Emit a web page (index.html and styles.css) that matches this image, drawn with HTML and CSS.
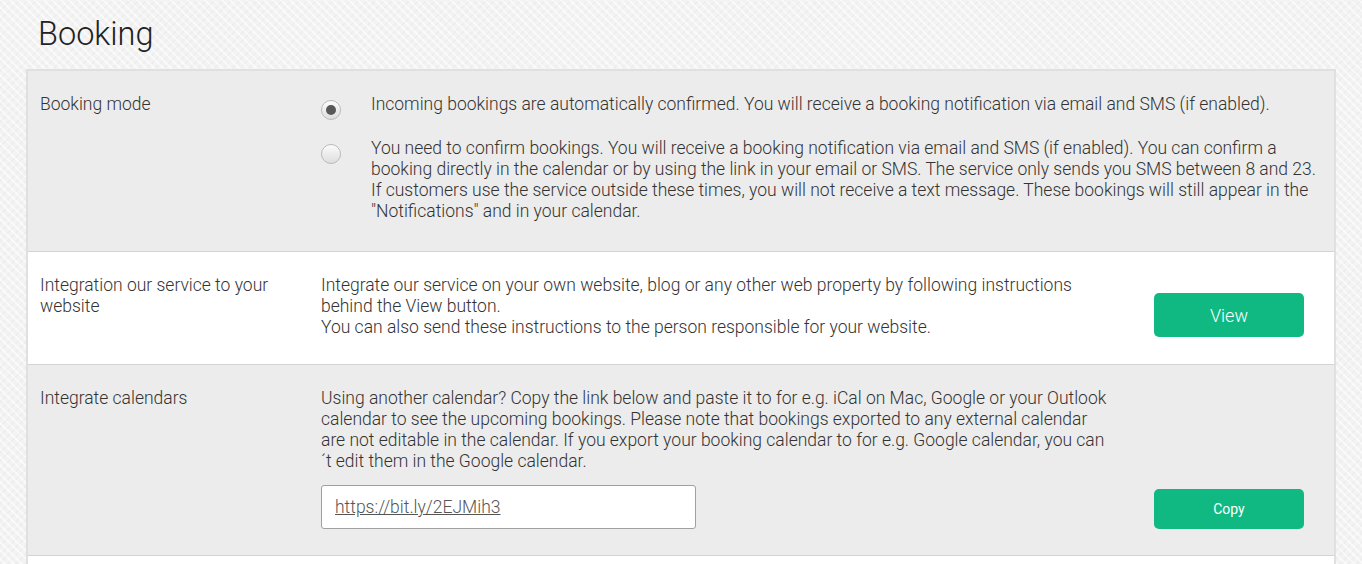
FILE: index.html
```html
<!DOCTYPE html>
<html>
<head>
<meta charset="utf-8">
<link rel="stylesheet" href="styles.css">
</head>
<body>
<div class="page">
  <h1 class="title">Booking</h1>
  <div class="panel">
    <div class="row row-gray row-mode">
      <div class="label">Booking mode</div>
      <div class="options">
        <div class="option">
          <span class="radio checked"></span>
          <p>Incoming bookings are automatically confirmed. You will receive a booking notification via email and SMS (if enabled).</p>
        </div>
        <div class="option">
          <span class="radio"></span>
          <p>You need to confirm bookings. You will receive a booking notification via email and SMS (if enabled). You can confirm a booking directly in the calendar or by using the link in your email or SMS. The service only sends you SMS between 8 and 23. If customers use the service outside these times, you will not receive a text message. These bookings will still appear in the "Notifications" and in your calendar.</p>
        </div>
      </div>
    </div>
    <div class="row row-white">
      <div class="label">Integration our service to your website</div>
      <div class="content">
        <p>Integrate our service on your own website, blog or any other web property by following instructions behind the View button.<br>You can also send these instructions to the person responsible for your website.</p>
      </div>
      <div class="action"><button class="btn btn-view">View</button></div>
    </div>
    <div class="row row-gray">
      <div class="label">Integrate calendars</div>
      <div class="content">
        <p>Using another calendar? Copy the link below and paste it to for e.g. iCal on Mac, Google or your Outlook calendar to see the upcoming bookings. Please note that bookings exported to any external calendar are not editable in the calendar. If you export your booking calendar to for e.g. Google calendar, you can ´t edit them in the Google calendar.</p>
        <div class="link-box"><a href="#">https://bit.ly/2EJMih3</a></div>
      </div>
      <div class="action"><button class="btn btn-copy">Copy</button></div>
    </div>
    <div class="row row-white row-last"></div>
  </div>
</div>
</body>
</html>
```
FILE: styles.css
```css
html, body {
  margin: 0;
  padding: 0;
}
body {
  background-color: #f3f3f3;
  background-image:
    repeating-linear-gradient(45deg, rgba(255,255,255,0.55) 0 2px, transparent 2px 6px),
    repeating-linear-gradient(-45deg, rgba(0,0,0,0.018) 0 2px, transparent 2px 6px);
  font-family: Roboto, "Liberation Sans", sans-serif;
  font-weight: 300;
  color: #333;
  font-size: 17.5px;
  line-height: 21px;
}
.page {
  padding: 0 26px;
}
.title {
  margin: 0;
  padding: 14px 0 0 12px;
  height: 69px;
  box-sizing: border-box;
  font-size: 32.5px;
  line-height: 40px;
  font-weight: 300;
  color: #222;
}
.panel {
  border: 2px solid #e0e0e0;
  border-bottom: none;
  background: #ececec;
}
.row {
  display: flex;
  align-items: flex-end;
  padding: 23px 30px 26px 12px;
  border-bottom: 1px solid #d5d5d5;
}
.row-gray { background: #ececec; }
.row-white { background: #fff; }
.row-mode {
  align-items: flex-start;
  padding-right: 16px;
  padding-bottom: 29px;
}
.row-last {
  min-height: 40px;
  border-bottom: none;
}
.label {
  width: 281px;
  flex: none;
  align-self: flex-start;
  padding-right: 20px;
  box-sizing: border-box;
}
p { margin: 0; }
.options {
  flex: 1;
  display: flex;
  flex-direction: column;
  gap: 18px;
}
.option {
  display: flex;
  align-items: flex-start;
}
.option p {
  flex: 1;
}
.radio {
  flex: none;
  width: 20px;
  height: 20px;
  margin: 6px 30px 0 0;
  box-sizing: border-box;
  border-radius: 50%;
  border: 1px solid #b9b9b9;
  background: linear-gradient(#fbfbfb, #dedede);
  box-shadow: inset 0 1px 1px rgba(255,255,255,0.8);
  position: relative;
}
.radio.checked::after {
  content: "";
  position: absolute;
  left: 4px;
  top: 4px;
  width: 10px;
  height: 10px;
  border-radius: 50%;
  background: #585858;
}
.content {
  width: 790px;
  flex: none;
}
.action {
  flex: 1;
  display: flex;
  justify-content: flex-end;
}
.btn {
  width: 150px;
  border: none;
  border-radius: 5px;
  background: #10b981;
  color: #fff;
  font-family: Roboto, "Liberation Sans", sans-serif;
  cursor: pointer;
}
.btn-view {
  height: 44px;
  font-size: 18px;
  font-weight: 300;
  margin-bottom: 1px;
}
.btn-copy {
  height: 40px;
  font-size: 14px;
  font-weight: 400;
}
.link-box {
  margin-top: 13px;
  width: 375px;
  height: 44px;
  box-sizing: border-box;
  border: 1px solid #a0a0a0;
  border-radius: 3px;
  background: #fff;
  padding: 11px 13px;
}
.link-box a {
  color: #555;
  text-decoration: underline;
}
```
